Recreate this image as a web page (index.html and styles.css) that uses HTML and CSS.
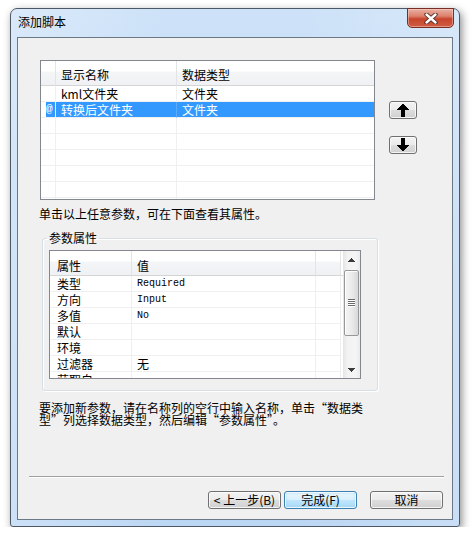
FILE: index.html
```html
<!DOCTYPE html>
<html lang="zh-CN">
<head>
<meta charset="utf-8">
<title>添加脚本</title>
<link rel="stylesheet" href="styles.css">
</head>
<body>
<div class="window">
  <div class="titlebar">
    <span class="title">添加脚本</span>
    <div class="close">
      <svg width="14" height="11" viewBox="0 0 14 11">
        <path d="M2.5 1.5 L11.5 9.5 M11.5 1.5 L2.5 9.5" stroke="#4a2a24" stroke-width="4.2" stroke-linecap="round" fill="none"/>
        <path d="M2.5 1.5 L11.5 9.5 M11.5 1.5 L2.5 9.5" stroke="#ffffff" stroke-width="2.4" stroke-linecap="round" fill="none"/>
      </svg>
    </div>
  </div>
  <div class="client">
    <div class="top-row">
      <div class="list">
        <div class="list-row list-head">
          <div class="cell rh"></div><div class="cell">显示名称</div><div class="cell">数据类型</div>
        </div>
        <div class="list-row">
          <div class="cell rh"></div><div class="cell">kml文件夹</div><div class="cell">文件夹</div>
        </div>
        <div class="list-row selected">
          <div class="cell rh">@</div><div class="cell">转换后文件夹</div><div class="cell">文件夹</div>
        </div>
        <div class="list-row"><div class="cell rh"></div><div class="cell"></div><div class="cell"></div></div>
        <div class="list-row"><div class="cell rh"></div><div class="cell"></div><div class="cell"></div></div>
        <div class="list-row"><div class="cell rh"></div><div class="cell"></div><div class="cell"></div></div>
        <div class="list-row"><div class="cell rh"></div><div class="cell"></div><div class="cell"></div></div>
        <div class="list-row"><div class="cell rh"></div><div class="cell"></div><div class="cell"></div></div>
        <div class="list-row"><div class="cell rh"></div><div class="cell"></div><div class="cell"></div></div>
      </div>
      <div class="move-btns">
        <button class="btn btn-move" type="button">
          <svg width="12" height="14" viewBox="0 0 12 14" shape-rendering="crispEdges"><path d="M6 0 L12 7 L8 7 L8 14 L4 14 L4 7 L0 7 Z" fill="#000"/></svg>
        </button>
        <button class="btn btn-move" type="button">
          <svg width="12" height="14" viewBox="0 0 12 14" shape-rendering="crispEdges"><path d="M4 0 L8 0 L8 7 L12 7 L6 14 L0 7 L4 7 Z" fill="#000"/></svg>
        </button>
      </div>
    </div>
    <p class="hint">单击以上任意参数，可在下面查看其属性。</p>
    <fieldset class="group">
      <legend>参数属性</legend>
      <div class="props">
        <div class="props-body">
          <div class="prow prow-head"><div class="pcell">属性</div><div class="pcell pval">值</div><div class="pcell"></div><div class="pcell blank"></div></div>
          <div class="prow"><div class="pcell">类型</div><div class="pcell pval mono">Required</div><div class="pcell"></div><div class="pcell blank"></div></div>
          <div class="prow"><div class="pcell">方向</div><div class="pcell pval mono">Input</div><div class="pcell"></div><div class="pcell blank"></div></div>
          <div class="prow"><div class="pcell">多值</div><div class="pcell pval mono">No</div><div class="pcell"></div><div class="pcell blank"></div></div>
          <div class="prow"><div class="pcell">默认</div><div class="pcell pval"></div><div class="pcell"></div><div class="pcell blank"></div></div>
          <div class="prow"><div class="pcell">环境</div><div class="pcell pval"></div><div class="pcell"></div><div class="pcell blank"></div></div>
          <div class="prow"><div class="pcell">过滤器</div><div class="pcell pval">无</div><div class="pcell"></div><div class="pcell blank"></div></div>
          <div class="prow"><div class="pcell">获取自</div><div class="pcell pval"></div><div class="pcell"></div><div class="pcell blank"></div></div>
        </div>
        <div class="scrollbar">
          <div class="sb-arrow"><svg width="7" height="4" viewBox="0 0 7 4" shape-rendering="crispEdges"><path d="M3.5 0 L7 4 L0 4 Z" fill="#3c3c3c"/></svg></div>
          <div class="sb-track">
            <div class="sb-thumb">
              <svg width="7" height="8" viewBox="0 0 7 8" shape-rendering="crispEdges">
                <path d="M0 0.5 H7 M0 2.5 H7 M0 4.5 H7 M0 6.5 H7" stroke="#6a6a6a" stroke-width="1"/>
                <path d="M0 1.5 H7 M0 3.5 H7 M0 5.5 H7 M0 7.5 H7" stroke="#ffffff" stroke-width="1"/>
              </svg>
            </div>
          </div>
          <div class="sb-arrow"><svg width="7" height="4" viewBox="0 0 7 4" shape-rendering="crispEdges"><path d="M0 0 L7 0 L3.5 4 Z" fill="#3c3c3c"/></svg></div>
        </div>
      </div>
    </fieldset>
    <p class="note">要添加新参数，请在名称列的空行中输入名称，单击“数据类<br>型”列选择数据类型，然后编辑“参数属性”。</p>
    <div class="separator"></div>
    <div class="actions">
      <button class="btn btn-dlg" type="button">&lt; 上一步(B)</button>
      <button class="btn btn-dlg btn-default" type="button">完成(F)</button>
      <button class="btn btn-dlg btn-cancel" type="button">取消</button>
    </div>
  </div>
</div>
</body>
</html>
```

FILE: styles.css
```css
* { box-sizing: border-box; }

body {
  margin: 0;
  background: #ffffff;
  font-family: "Noto Sans CJK SC", "Liberation Sans", sans-serif;
  font-size: 12px;
  color: #000;
}

.window {
  margin: 8px 0 0 10px;
  width: 450px;
  height: 519px;
  border: 1px solid #4d5866;
  border-radius: 7px 7px 3px 3px;
  background:
    linear-gradient(to right, rgba(255,255,255,0.25), rgba(255,255,255,0) 35%, rgba(255,255,255,0) 65%, rgba(255,255,255,0.2)),
    linear-gradient(#cde2f8, #c3dbf5 40%, #bcd7f4);
  padding: 0 6px 6px;
  display: flex;
  flex-direction: column;
  box-shadow: 2px 3px 9px rgba(0, 0, 0, 0.45);
}

.titlebar {
  height: 28px;
  display: flex;
  align-items: flex-start;
}

.title {
  margin: 5px 0 0 1px;
  line-height: 16px;
  font-size: 12px;
  color: #000;
}

.close {
  margin: -1px -1px 0 auto;
  width: 47px;
  height: 20px;
  border: 1px solid #7a2d22;
  border-radius: 0 0 5px 5px;
  background: linear-gradient(#e9b0a4, #dc806a 40%, #c8442d 55%, #cf5c44);
  box-shadow: inset 0 0 0 1px rgba(255, 220, 210, 0.45);
  display: flex;
  align-items: center;
  justify-content: center;
}

.client {
  height: 483px;
  border: 1px solid #6b7886;
  background: #f0f0f0;
  padding-top: 22px;
  display: flex;
  flex-direction: column;
}

.top-row {
  display: flex;
  margin-left: 22px;
}

.list {
  width: 335px;
  height: 140px;
  border: 1px solid #828790;
  background: #fff;
  overflow: hidden;
}

.list-row {
  display: grid;
  grid-template-columns: 15px 121px 1fr;
  height: 16px;
}

.cell {
  border-right: 1px solid #f0f0f0;
  border-bottom: 1px solid #f0f0f0;
  padding-left: 5px;
  line-height: 15px;
  white-space: nowrap;
  overflow: hidden;
}

.cell:last-child { border-right: none; }

.list-head {
  height: 25px;
}

.list-head .cell {
  background: linear-gradient(#ffffff 0, #ffffff 42%, #f4f5f7 46%, #eff1f4 100%);
  border-bottom: 1px solid #d5d5d5;
  border-right-color: #e3e4e6;
  padding-top: 3px;
  line-height: 21px;
}

.rh {
  font-family: "Liberation Mono", monospace;
  font-size: 11px;
}

.selected .cell {
  background: #3399ff;
  color: #fff;
  border-right-color: #5aacff;
}

.selected .rh {
  background: linear-gradient(to right, #ffffff 5px, #3399ff 5px);
  border-right-color: #f0f0f0;
}

.move-btns {
  display: flex;
  flex-direction: column;
  gap: 17px;
  margin: 41px 0 0 14px;
}

.btn {
  border: 1px solid #707070;
  border-radius: 3px;
  background: linear-gradient(#f3f3f3 0, #ebebeb 48%, #dddddd 52%, #d0d0d0 100%);
  box-shadow: inset 0 0 0 1px rgba(255, 255, 255, 0.75);
  padding: 0;
  font-family: "Noto Sans CJK SC", "Liberation Sans", sans-serif;
  font-size: 12px;
  color: #000;
  display: flex;
  align-items: center;
  justify-content: center;
  line-height: 16px;
}

.btn-move {
  width: 28px;
  height: 18px;
}

.hint {
  margin: 7px 0 0 21px;
  line-height: 14px;
}

.group {
  margin: 11px 0 0 24px;
  width: 336px;
  padding: 0 16px 11px 6px;
  border: 1px solid #d5dfe5;
  border-radius: 3px;
  box-shadow: inset 1px 1px 0 #ffffff, 1px 1px 0 #ffffff;
  min-inline-size: 0;
}

.group legend {
  padding: 0 2px;
  margin-left: -2px;
  font-size: 12px;
  line-height: 12px;
}

.props {
  display: flex;
  width: 312px;
  height: 129px;
  margin-top: 6px;
  border: 1px solid #828790;
  background: #fff;
}

.props-body {
  flex: 1;
  overflow: hidden;
}

.prow {
  display: grid;
  grid-template-columns: 82px 184px 25px 1fr;
  height: 16px;
}

.pcell {
  border-right: 1px solid #f0f0f0;
  border-bottom: 1px solid #f0f0f0;
  padding-left: 7px;
  line-height: 15px;
  white-space: nowrap;
  overflow: hidden;
}

.pcell.pval { padding-left: 5px; }

.pcell.blank {
  border-right: none;
  border-bottom: none;
}

.prow-head { height: 25px; }

.prow-head .pcell {
  background: linear-gradient(#ffffff 0, #ffffff 42%, #f4f5f7 46%, #eff1f4 100%);
  border-bottom: 1px solid #d5d5d5;
  border-right-color: #e3e4e6;
  padding-top: 6px;
  line-height: 18px;
}

.prow-head .pcell.blank {
  background: #fff;
  border-bottom: 1px solid #d5d5d5;
}

.mono {
  font-family: "Liberation Mono", monospace;
  font-size: 10px;
}

.scrollbar {
  width: 17px;
  display: flex;
  flex-direction: column;
  background: linear-gradient(to right, #e4e4e4, #f2f2f2 25%, #f5f5f5 75%, #ebebeb);
}

.sb-arrow {
  height: 17px;
  display: flex;
  align-items: center;
  justify-content: center;
}

.sb-track {
  flex: 1;
  padding-top: 2px;
}

.sb-thumb {
  height: 66px;
  margin: 0 1px;
  border: 1px solid #989898;
  border-radius: 2px;
  background: linear-gradient(to right, #f5f5f5, #ebebeb 50%, #d9d9d9);
  box-shadow: inset 1px 1px 0 #ffffff;
  display: flex;
  align-items: center;
  justify-content: center;
}

.note {
  margin: 11px 0 0 21px;
  line-height: 12px;
}

.separator {
  margin: 50px 0 0 11px;
  width: 415px;
  height: 2px;
  border-top: 1px solid #a0a0a0;
  border-bottom: 1px solid #ffffff;
}

.actions {
  display: flex;
  justify-content: flex-end;
  margin: 13px 9px 0 0;
}

.btn-dlg {
  width: 73px;
  height: 18px;
}

.btn-default {
  margin-left: 3px;
  border-color: #3c7fb1;
  background: linear-gradient(#eaf6fd 0, #d9f0fc 48%, #bee6fd 52%, #a7d9f5 100%);
  box-shadow: inset 0 0 0 1px rgba(255, 255, 255, 0.8), inset 0 0 2px 1px #9fd4f4;
}

.btn-cancel {
  margin-left: 13px;
}
```
